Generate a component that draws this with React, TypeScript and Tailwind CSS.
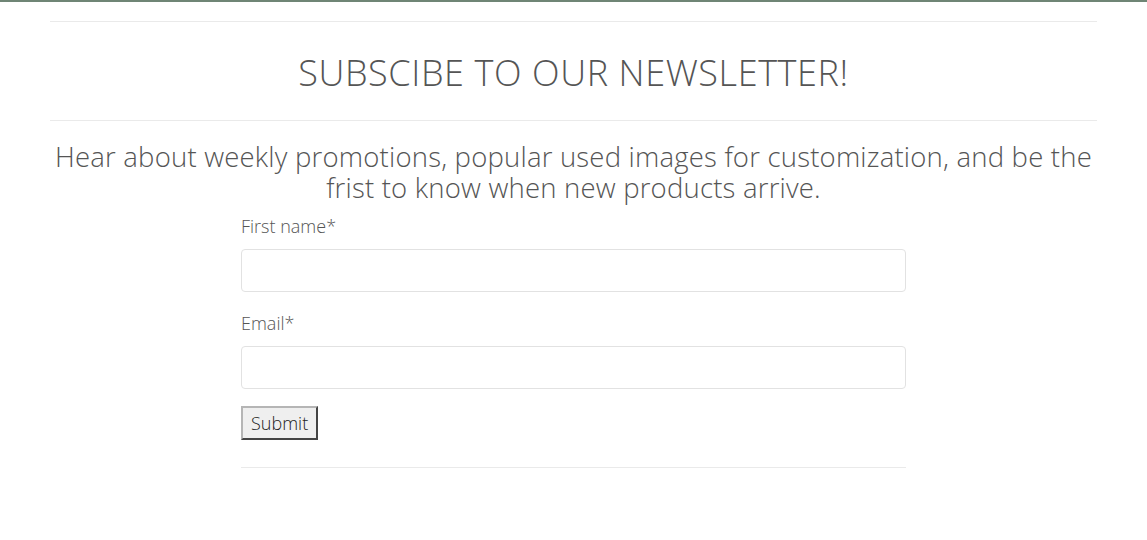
import React from 'react';

const font = { fontFamily: '"Open Sans", "Noto Sans", sans-serif' };

export default function App() {
  return (
    <div className="min-h-[540px] border-t-2 border-[#6f8575] bg-white text-[#555]" style={font}>
      <div className="mx-[50px] pt-[19px]">
        <hr className="border-t border-[#eaeaea]" />
        <h2 className="pt-[29px] pb-[25px] text-center text-[36px] leading-[44px] font-light tracking-[0.6px]">
          SUBSCIBE TO OUR NEWSLETTER!
        </h2>
        <hr className="border-t border-[#eaeaea]" />
        <p className="mt-[20px] text-center text-[27.5px] leading-[31px] font-light tracking-[0.2px]">
          Hear about weekly promotions, popular used images for customization, and be the frist to know when new products arrive.
        </p>
        <form className="mx-auto mt-[10px] w-[665px]" onSubmit={(e) => e.preventDefault()}>
          <label className="block text-[18px] leading-[26px] font-light">First name*</label>
          <input
            type="text"
            className="mt-[10px] block h-[43px] w-full rounded-[4px] border border-[#e2e2e2] px-3 text-[16px] outline-none"
          />
          <label className="mt-[18px] block text-[18px] leading-[26px] font-light">Email*</label>
          <input
            type="email"
            className="mt-[10px] block h-[43px] w-full rounded-[4px] border border-[#e2e2e2] px-3 text-[16px] outline-none"
          />
          <button
            type="submit"
            className="mt-[17px] h-[34px] border-2 border-t-[#b5b5b5] border-l-[#b5b5b5] border-r-[#444] border-b-[#444] bg-[#efefef] px-[8px] text-[18px] leading-[28px] font-light text-[#222]"
          >
            Submit
          </button>
          <hr className="mt-[27px] border-t border-[#eaeaea]" />
        </form>
      </div>
    </div>
  );
}
